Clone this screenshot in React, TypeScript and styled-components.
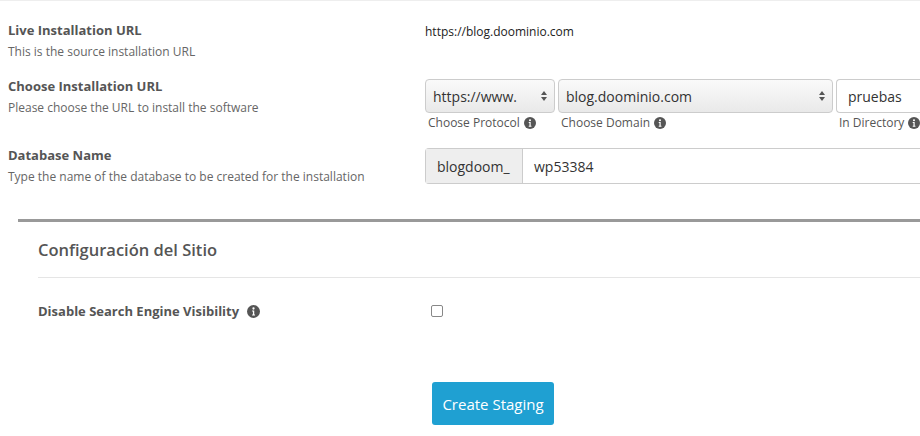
import React from "react";
import styled, { createGlobalStyle } from "styled-components";

const Global = createGlobalStyle`
  body { margin: 0; background: #fff; font-family: "Open Sans", sans-serif; color: #333; overflow: hidden; }
`;
const Page = styled.div`width: 920px; height: 436px; border-top: 1px solid #eee; box-sizing: border-box;`;
const Row = styled.div<{ h: number }>`display: grid; grid-template-columns: 425px 1fr; height: ${p => p.h}px; padding-left: 8px; align-items: start;`;
const Label = styled.div`display: flex; flex-direction: column; gap: 5px;`;
const Title = styled.div`font-size: 13px; font-weight: 700; color: #555; line-height: 17px;`;
const Sub = styled.div`font-size: 12px; color: #666; line-height: 16px;`;
const Plain = styled.div`font-size: 12px; color: #222; padding-top: 1px; margin-left: -8px;`;
const Fields = styled.div`display: flex; gap: 3px; margin-left: -8px; margin-top: 1px;`;
const Field = styled.div`display: flex; flex-direction: column; gap: 1px;`;
const Select = styled.div<{ w: number }>`width: ${p => p.w}px; height: 34px; box-sizing: border-box; border: 1px solid #ccc; border-radius: 4px;
  background: linear-gradient(#fafafa, #e9e9e9); display: flex; align-items: center; justify-content: space-between; padding: 0 6px 0 7px; font-size: 14px; color: #333;`;
const Input = styled.div<{ w: number }>`width: ${p => p.w}px; height: 34px; box-sizing: border-box; border: 1px solid #ccc; border-right: none; border-radius: 4px 0 0 4px;
  display: flex; align-items: center; padding-left: 11px; font-size: 14px; color: #333;`;
const Help = styled.div`font-size: 12px; color: #555; display: flex; align-items: center; gap: 4px; padding-left: 3px;`;
const Group = styled.div`display: flex; height: 34px; margin-left: -8px; margin-top: 1px; border: 1px solid #ccc; border-right: none; border-radius: 4px 0 0 4px; font-size: 14px; color: #333;`;
const Addon = styled.div`background: #eee; border-right: 1px solid #ccc; width: 97px; display: flex; align-items: center; padding-left: 11px; box-sizing: border-box;`;
const GroupText = styled.div`display: flex; align-items: center; padding-left: 11px;`;
const Thick = styled.div`margin: 32px 0 0 18px; height: 3px; background: #999;`;
const Section = styled.div`padding-left: 38px;`;
const Heading = styled.div`font-size: 16.5px; font-weight: 600; color: #555; height: 55px; display: flex; align-items: center; border-bottom: 1px solid #e5e5e5;`;
const CheckRow = styled.div`display: grid; grid-template-columns: 393px 1fr; align-items: center; height: 66px;`;
const CheckLabel = styled.div`font-size: 13px; font-weight: 700; color: #555; display: flex; align-items: center; gap: 8px;`;
const Box = styled.div`width: 10px; height: 10px; border: 1px solid #888; border-radius: 2px;`;
const Btn = styled.button`display: block; margin: 38px 0 0 432px; width: 122px; height: 43px; border: none; border-radius: 3px; background: #1fa0d2; color: #fff;
  font-family: "Open Sans", sans-serif; font-size: 15px;`;

const Info = ({ s = 12 }: { s?: number }) => (
  <svg width={s} height={s} viewBox="0 0 16 16"><circle cx="8" cy="8" r="8" fill="#555" /><circle cx="8" cy="4.3" r="1.4" fill="#fff" /><path d="M6.3 6.8h2.6v4.8h1v1.3H6.3v-1.3h1V8.1h-1z" fill="#fff" /></svg>
);
const Arrows = () => (
  <svg width="8" height="12" viewBox="0 0 8 12"><path d="M4 1l3 4H1zM4 11l3-4H1z" fill="#555" /></svg>
);

export default function App() {
  return (
    <Page>
      <Global />
      <Row h={21} />
      <Row h={56}>
        <Label><Title>Live Installation URL</Title><Sub>This is the source installation URL</Sub></Label>
        <Plain>https://blog.doominio.com</Plain>
      </Row>
      <Row h={69}>
        <Label><Title>Choose Installation URL</Title><Sub>Please choose the URL to install the software</Sub></Label>
        <Fields>
          <Field><Select w={130}>https://www. <Arrows /></Select><Help>Choose Protocol <Info /></Help></Field>
          <Field><Select w={275}>blog.doominio.com <Arrows /></Select><Help>Choose Domain <Info /></Help></Field>
          <Field><Input w={100}>pruebas</Input><Help>In Directory <Info /></Help></Field>
        </Fields>
      </Row>
      <Row h={40}>
        <Label><Title>Database Name</Title><Sub>Type the name of the database to be created for the installation</Sub></Label>
        <Group><Addon>blogdoom_</Addon><GroupText>wp53384</GroupText></Group>
      </Row>
      <Thick />
      <Section>
        <Heading>Configuración del Sitio</Heading>
        <CheckRow><CheckLabel>Disable Search Engine Visibility <Info s={13} /></CheckLabel><Box /></CheckRow>
      </Section>
      <Btn>Create Staging</Btn>
    </Page>
  );
}
